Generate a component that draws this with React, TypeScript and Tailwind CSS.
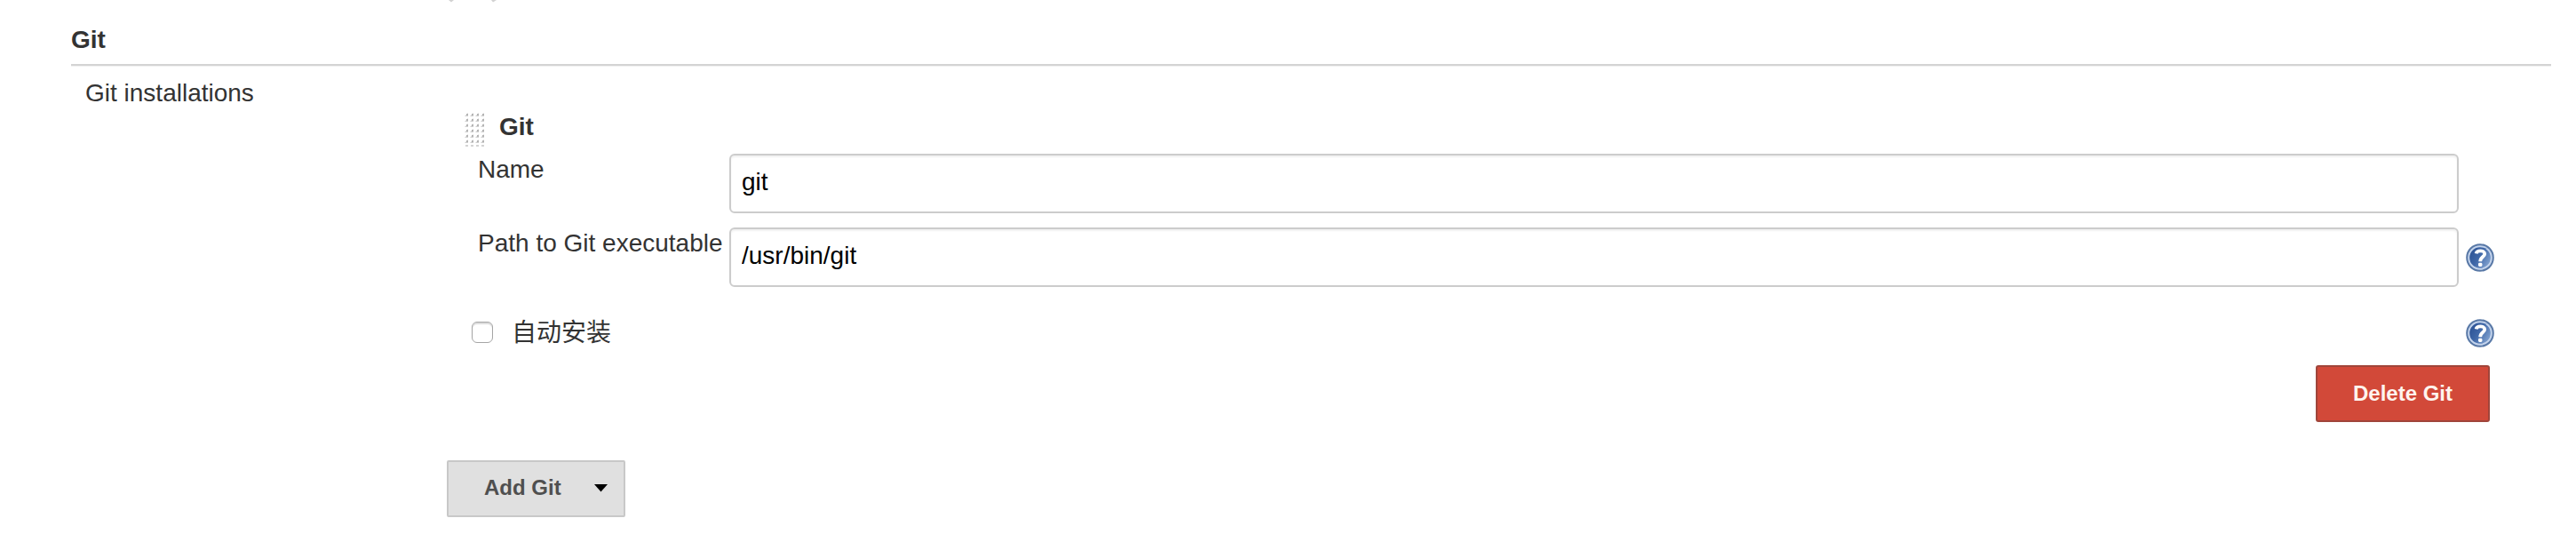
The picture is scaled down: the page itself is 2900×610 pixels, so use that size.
import React from "react";

function HelpIcon() {
  return (
    <svg width="32" height="32" viewBox="0 0 32 32" className="block shrink-0" aria-label="Help">
      <defs>
        <linearGradient id="helpFill" x1="0" y1="0.2" x2="1" y2="0.8">
          <stop offset="0" stopColor="#2c5294" />
          <stop offset="0.45" stopColor="#4068a8" />
          <stop offset="1" stopColor="#86a6d2" />
        </linearGradient>
      </defs>
      <circle cx="16" cy="16" r="15.8" fill="#5878a6" />
      <circle cx="16" cy="16" r="13.8" fill="#c3d3ec" />
      <circle cx="16" cy="16" r="11.8" fill="url(#helpFill)" />
      <path d="M11.6 11.4 C12.2 7.6 21.2 7.2 21.2 11.8 C21.2 15.2 16.4 15 16.2 20.2" fill="none" stroke="#fff" strokeWidth="3.8" />
      <rect x="14" y="21.8" width="4.4" height="4.2" rx="1.4" fill="#fff" />
    </svg>
  );
}

function DragHandle() {
  const rows = [0, 1, 2, 3, 4, 5];
  const cols = [0, 1, 2, 3];
  return (
    <svg width="24" height="40" viewBox="0 0 24 40" className="block shrink-0">
      {rows.map((r) =>
        cols.map((c) => (
          <g key={`${r}-${c}`}>
            <path d={`M${c * 6} ${r * 6 + 5}h4v-4z`} fill="#d0d0d0" />
            <rect x={c * 6 + 2} y={r * 6 + 2} width="2" height="2" fill="#b4b4b4" />
          </g>
        )),
      )}
      {cols.map((c) => (
        <rect key={c} x={c * 6 + 1} y="37" width="3" height="2" fill="#d4d4d4" />
      ))}
    </svg>
  );
}

function TextField({ label, value, help }: { label: string; value: string; help?: boolean }) {
  return (
    <div className="flex h-[67px] items-start">
      <label className="w-[284px] shrink-0 whitespace-nowrap pl-px leading-[36px]">{label}</label>
      <input
        type="text"
        defaultValue={value}
        className="h-[67px] w-[1947px] rounded-[6px] border-2 border-[#ccc] bg-white px-3 pb-1 text-[28px] text-black shadow-[inset_0_2px_2px_rgba(0,0,0,0.06)] outline-none"
      />
      {help && (
        <div className="ml-2 mt-[18px]">
          <HelpIcon />
        </div>
      )}
    </div>
  );
}

export default function App() {
  return (
    <main className="h-[610px] w-[2900px] overflow-hidden bg-white pl-20 font-['Liberation_Sans','Noto_Sans_CJK_SC',sans-serif] text-[28px] text-[#333]">
      <svg width="640" height="28" viewBox="0 0 640 28" className="block">
        <path d="M425 0h6l-3 2.5zM473 0h6l-4 2.5z" fill="#d2d2d2" />
      </svg>
      <h2 className="h-11 w-[2792px] font-bold leading-[34px]">Git</h2>
      <div className="h-[3px] w-[2792px] border-t-2 border-[#d4d4d4] bg-[#f0f0f0]" />
      <div className="flex">
        <div className="w-[423px] shrink-0 pl-4 pt-[13px] leading-[34px]">Git installations</div>
        <section className="w-[2305px] pt-[51px]">
          <header className="flex h-[47px] items-start pl-5">
            <DragHandle />
            <h3 className="ml-[15px] font-bold leading-[34px]">Git</h3>
          </header>
          <div className="flex flex-col gap-4 pl-[34px]">
            <TextField label="Name" value="git" />
            <TextField label="Path to Git executable" value="/usr/bin/git" help />
          </div>
          <div className="mt-9 flex h-8 items-center pl-7">
            <input
              type="checkbox"
              className="mt-[-2px] size-6 appearance-none rounded-[6px] border border-[#a5a5a5] bg-white shadow-[inset_0_2px_1px_rgba(0,0,0,0.14)]"
            />
            <label className="-mt-px ml-[21px] text-[28px] leading-8">自动安装</label>
            <div className="ml-auto">
              <HelpIcon />
            </div>
          </div>
          <div className="mt-5 flex justify-end pr-[5px]">
            <button className="h-16 w-[196px] rounded-[3px] border-2 border-[#a0453a] bg-[#d24939] text-[24px] font-bold leading-[56px] text-[#fff4ee]">
              Delete Git
            </button>
          </div>
          <button className="mt-[43px] flex h-16 w-[201px] items-center rounded-[2px] border-2 border-[#c8c8c8] bg-[#e0e0e0] pl-10 text-[24px] font-bold text-[#4f4f4f]">
            <span className="-mt-0.5 leading-7">Add Git</span>
            <svg width="16" height="9" viewBox="0 0 16 9" className="ml-auto mr-[17px] mt-[-1px]">
              <path d="M0 0h15L7.5 8.5z" fill="#000" />
            </svg>
          </button>
        </section>
      </div>
    </main>
  );
}
